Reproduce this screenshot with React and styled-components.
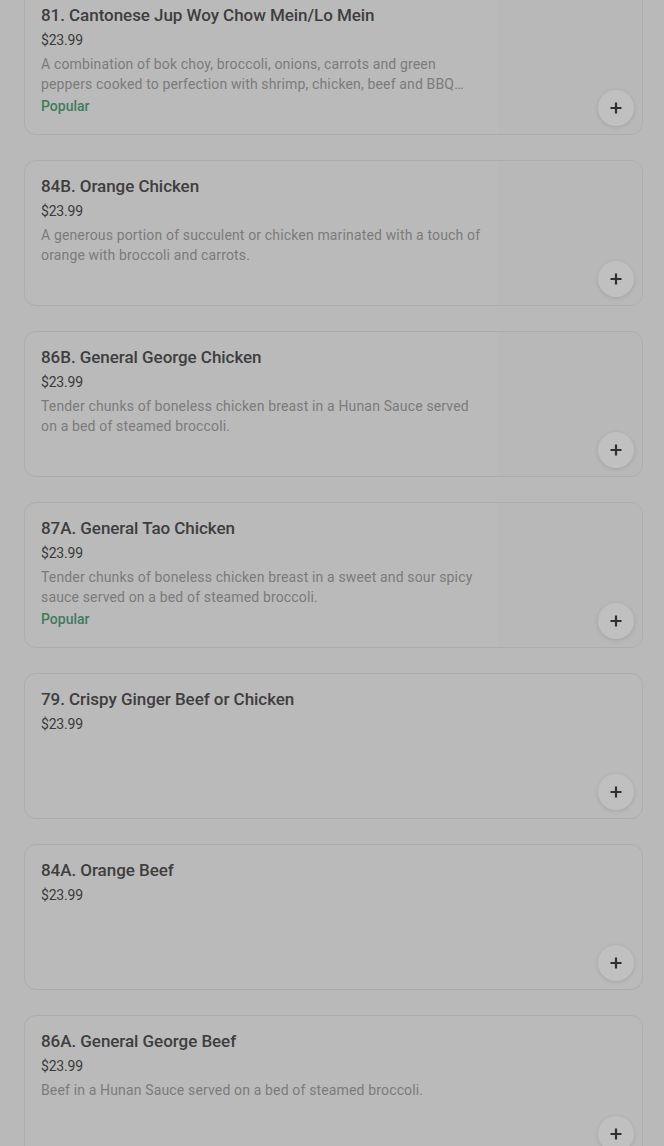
import React from "react";
import styled, { createGlobalStyle } from "styled-components";

const Global = createGlobalStyle`
  html, body { margin: 0; padding: 0; background: #b9b9b9; }
  body { font-family: Roboto, "Noto Sans", Arial, sans-serif; }
  * { box-sizing: border-box; }
`;

const List = styled.div`
  display: flex;
  flex-direction: column;
  gap: 25px;
  padding: 0 21px 0 24px;
  margin-top: -11px;
`;

const Card = styled.div`
  position: relative;
  display: flex;
  height: 146px;
  border: 1px solid #adadad;
  border-radius: 12px;
  background: #bababa;
  overflow: hidden;
`;

const Info = styled.div`
  flex: 1;
  min-width: 0;
  padding: 14px 16px 16px 16px;
  display: flex;
  flex-direction: column;
`;

const Title = styled.div`
  font-size: 17px;
  line-height: 22px;
  font-weight: 500;
  letter-spacing: -0.05px;
  color: #3e3e3e;
`;

const Price = styled.div`
  margin-top: 4px;
  font-size: 14px;
  line-height: 20px;
  letter-spacing: -0.2px;
  color: #3b3b3b;
`;

const Desc = styled.div`
  margin-top: 4px;
  font-size: 14px;
  line-height: 20px;
  letter-spacing: 0.15px;
  color: #7b7b7b;
  display: -webkit-box;
  -webkit-line-clamp: 2;
  -webkit-box-orient: vertical;
  overflow: hidden;
`;

const Tag = styled.div`
  margin-top: 2px;
  font-size: 14px;
  line-height: 20px;
  font-weight: 500;
  color: #3f7a5c;
`;

const Pic = styled.div`
  width: 144px;
  flex-shrink: 0;
  background: #b8b8b8;
`;

const AddButton = styled.button`
  position: absolute;
  right: 8px;
  bottom: 8px;
  width: 36px;
  height: 36px;
  border-radius: 50%;
  border: none;
  background: #c0c0c0;
  box-shadow: 0 1px 4px rgba(0, 0, 0, 0.12);
  display: flex;
  align-items: center;
  justify-content: center;
  padding: 0;
`;

const Plus = () => (
  <svg width="12" height="12" viewBox="0 0 12 12">
    <path d="M6 0.5v11M0.5 6h11" stroke="#2f2f2f" strokeWidth="2.2" />
  </svg>
);

const items = [
  {
    title: "81. Cantonese Jup Woy Chow Mein/Lo Mein",
    desc: "A combination of bok choy, broccoli, onions, carrots and green peppers cooked to perfection with shrimp, chicken, beef and BBQ pork served over crispy noodles.",
    popular: true,
    pic: true,
  },
  {
    title: "84B. Orange Chicken",
    desc: "A generous portion of succulent or chicken marinated with a touch of orange with broccoli and carrots.",
    pic: true,
  },
  {
    title: "86B. General George Chicken",
    desc: "Tender chunks of boneless chicken breast in a Hunan Sauce served on a bed of steamed broccoli.",
    pic: true,
  },
  {
    title: "87A. General Tao Chicken",
    desc: "Tender chunks of boneless chicken breast in a sweet and sour spicy sauce served on a bed of steamed broccoli.",
    popular: true,
    pic: true,
  },
  { title: "79. Crispy Ginger Beef or Chicken" },
  { title: "84A. Orange Beef" },
  {
    title: "86A. General George Beef",
    desc: "Beef in a Hunan Sauce served on a bed of steamed broccoli.",
  },
];

export default function App() {
  return (
    <>
      <Global />
      <List>
        {items.map((it) => (
          <Card key={it.title}>
            <Info>
              <Title>{it.title}</Title>
              <Price>$23.99</Price>
              {it.desc && <Desc>{it.desc}</Desc>}
              {it.popular && <Tag>Popular</Tag>}
            </Info>
            {it.pic && <Pic />}
            <AddButton aria-label="Add">
              <Plus />
            </AddButton>
          </Card>
        ))}
      </List>
    </>
  );
}
